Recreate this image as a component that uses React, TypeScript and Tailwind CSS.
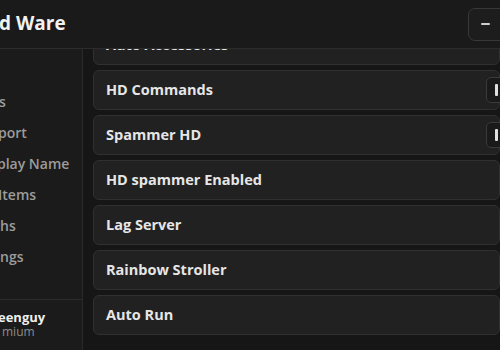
const font = { fontFamily: '"Open Sans", "Noto Sans", sans-serif' }

const navItems = [
  { label: "s", offset: "ml-[-1px]" },
  { label: "port", offset: "ml-[-2px]" },
  { label: "play Name", offset: "ml-[-3px]" },
  { label: "Items", offset: "ml-[-2px]" },
  { label: "hs", offset: "ml-[0px]" },
  { label: "ngs", offset: "ml-[0px]" },
]

const features = [
  { name: "Auto Accessories", keybind: false },
  { name: "HD Commands", keybind: true },
  { name: "Spammer HD", keybind: true },
  { name: "HD spammer Enabled", keybind: false },
  { name: "Lag Server", keybind: false },
  { name: "Rainbow Stroller", keybind: false },
  { name: "Auto Run", keybind: false },
]

function FeatureRow({ name, keybind }: { name: string; keybind: boolean }) {
  return (
    <div className="flex h-[40px] shrink-0 items-center justify-between rounded-[6px] border border-[#303030] bg-[#212121] pl-[12px]">
      <span className="text-[14.5px] font-bold text-[#e6e6e6]">{name}</span>
      {keybind && (
        <div className="mr-[-20px] flex h-[26px] w-[33px] items-center rounded-[5px] border border-[#3a3a3a] bg-[#1a1a1a] pl-[8px]">
          <div className="h-[12px] w-[3px] rounded-[1px] bg-[#e0e0e0]" />
        </div>
      )}
    </div>
  )
}

export default function App() {
  return (
    <div className="flex h-[350px] w-[500px] flex-col overflow-hidden bg-[#161616]" style={font}>
      <header className="flex h-[49px] shrink-0 items-center justify-between border-b border-[#2c2c2c] bg-[#1a1a1a]">
        <h1 className="ml-[-1px] mt-[-2px] text-[19px] font-bold text-[#f2f2f2]">d Ware</h1>
        <button className="mr-[-20px] flex h-[33px] w-[52px] items-center rounded-[7px] border border-[#383838] bg-[#1d1d1d] pl-[12px]">
          <span className="h-[2px] w-[9px] rounded-full bg-[#d0d0d0]" />
        </button>
      </header>

      <div className="flex min-h-0 flex-1">
        <aside className="flex w-[83px] shrink-0 flex-col border-r border-[#2a2a2a] bg-[#1b1b1b]">
          <nav className="flex flex-1 flex-col pt-[37px]">
            {navItems.map((item) => (
              <div key={item.label} className="flex h-[31px] items-center">
                <span className={`whitespace-nowrap text-[14px] font-semibold text-[#9c9c9c] ${item.offset}`}>
                  {item.label}
                </span>
              </div>
            ))}
          </nav>
          <div className="flex h-[51px] flex-col border-t border-[#2c2c2c] pt-[9px]">
            <span className="ml-[-2px] text-[13px] font-bold leading-[16px] text-[#efefef]">eenguy</span>
            <span className="ml-[2px] text-[12px] leading-[14px] text-[#8c8c8c]">mium</span>
          </div>
        </aside>

        <main className="min-w-0 flex-1 overflow-hidden pl-[10px]">
          <div className="mt-[-24px] flex flex-col gap-[5px]">
            {features.map((f) => (
              <FeatureRow key={f.name} name={f.name} keybind={f.keybind} />
            ))}
          </div>
        </main>
      </div>
    </div>
  )
}
